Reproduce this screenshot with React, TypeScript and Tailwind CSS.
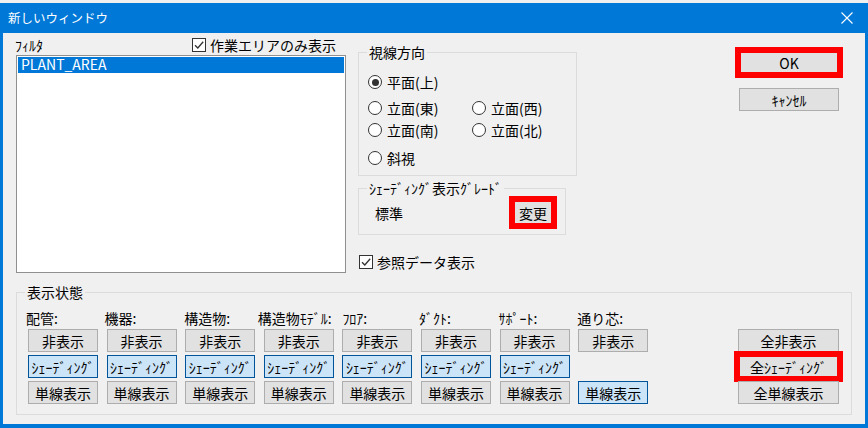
import React from "react";

const font = "font-['Noto_Sans_CJK_JP','Noto_Sans',sans-serif]";

type BtnProps = {
  children?: React.ReactNode;
  on?: boolean;
  mark?: boolean;
  className?: string;
};

function Btn({ children, on = false, mark = false, className = "" }: BtnProps) {
  const tone = on ? "border-[#005499] bg-[#cce4f7]" : "border-[#adadad] bg-[#e1e1e1]";
  const ring = mark ? "outline-solid outline-[6px] outline-offset-[-2px] outline-[#ff0000]" : "";
  return (
    <button
      className={`flex items-center justify-center whitespace-nowrap border text-[14px] leading-none text-black ${tone} ${ring} ${className}`}
    >
      {children}
    </button>
  );
}

function CheckBox() {
  return (
    <span className="flex h-[14px] w-[14px] shrink-0 items-center justify-center border border-[#333333] bg-white">
      <svg width="12" height="12" viewBox="0 0 12 12">
        <path d="M2 6.2 L4.8 9 L10.2 2.8" fill="none" stroke="#333333" strokeWidth="1.3" />
      </svg>
    </span>
  );
}

function Radio({ on = false }: { on?: boolean }) {
  return (
    <span className="flex h-[14px] w-[14px] shrink-0 items-center justify-center rounded-full border border-[#333333] bg-white">
      {on && <span className="h-[7px] w-[7px] rounded-full bg-[#333333]" />}
    </span>
  );
}

function RadioItem({ label, on = false }: { label: string; on?: boolean }) {
  return (
    <div className="flex w-[104px] items-center gap-[5px]">
      <Radio on={on} />
      <span>{label}</span>
    </div>
  );
}

const columns = [
  { label: "配管:", shift: "-ml-[2px]", line: false },
  { label: "機器:", shift: "-ml-[2px]", line: false },
  { label: "構造物:", shift: "-ml-[1px]", line: false },
  { label: "構造物ﾓﾃﾞﾙ:", shift: "-ml-[6px]", line: false },
  { label: "ﾌﾛｱ:", shift: "ml-0", line: false },
  { label: "ﾀﾞｸﾄ:", shift: "-ml-[2px]", line: false },
  { label: "ｻﾎﾟｰﾄ:", shift: "-ml-[1px]", line: false },
  { label: "通り芯:", shift: "-ml-[1px]", line: true },
];

export default function App() {
  return (
    <div className={`flex h-[428px] w-[868px] flex-col bg-[#0078d7] text-[14px] leading-[16px] text-black ${font}`}>
      {/* top edge */}
      <div className="h-[3px] bg-[#f0f0f0]" />

      {/* Title bar */}
      <div className="flex h-[30px] items-center justify-between pl-[8px] pr-[15px]">
        <span className="text-[12.5px] text-white">新しいウィンドウ</span>
        <svg width="12" height="12" viewBox="0 0 12 12">
          <path d="M0.5 0.5 L11.5 11.5 M11.5 0.5 L0.5 11.5" stroke="#ffffff" strokeWidth="1.1" />
        </svg>
      </div>

      {/* Client area */}
      <div className="mx-[3px] mb-[4px] flex flex-1 flex-col bg-[#f0f0f0]">
        <div className="flex h-[243px]">
          {/* Filter list */}
          <div className="ml-[13px] flex w-[330px] flex-col pt-[3px]">
            <div className="flex h-[17px] items-center">
              <span className="-ml-px">ﾌｨﾙﾀ</span>
              <label className="ml-auto mr-[10px] flex items-center gap-[4px]">
                <CheckBox />
                <span>作業エリアのみ表示</span>
              </label>
            </div>
            <div className="mt-[2px] h-[218px] border border-[#8f8f8f] bg-white p-px">
              <div className="h-[16px] bg-[#0078d7] pl-[3px] leading-[14px] text-white">PLANT_AREA</div>
            </div>
          </div>

          {/* View direction / shading */}
          <div className="ml-[12px] flex w-[208px] flex-col">
            <fieldset className="mt-[11px] h-[132px] border border-[#dcdcdc]">
              <legend className="ml-[8px] px-[2px] leading-[16px]">視線方向</legend>
              <div className="flex flex-col pl-[9px]">
                <div className="mt-[14px] flex h-[16px] items-center">
                  <RadioItem label="平面(上)" on />
                </div>
                <div className="mt-[10px] flex h-[16px] items-center">
                  <RadioItem label="立面(東)" />
                  <RadioItem label="立面(西)" />
                </div>
                <div className="mt-[6px] flex h-[16px] items-center">
                  <RadioItem label="立面(南)" />
                  <RadioItem label="立面(北)" />
                </div>
                <div className="mt-[12px] flex h-[16px] items-center">
                  <RadioItem label="斜視" />
                </div>
              </div>
            </fieldset>

            <fieldset className="mt-[4px] h-[55px] border border-[#dcdcdc]">
              <legend className="ml-[8px] px-[2px] leading-[16px]">ｼｪｰﾃﾞｨﾝｸﾞ表示ｸﾞﾚｰﾄﾞ</legend>
              <div className="mt-[4px] flex h-[25px] items-center pl-[16px] pr-[12px]">
                <span>標準</span>
                <Btn mark className="ml-auto h-[25px] w-[40px]">変更</Btn>
              </div>
            </fieldset>

            <label className="mt-[19px] flex h-[16px] items-center gap-[4px] pl-px">
              <CheckBox />
              <span>参照データ表示</span>
            </label>
          </div>

          {/* OK / Cancel */}
          <div className="ml-auto mr-[26px] flex flex-col pt-[18px]">
            <Btn mark className="h-[23px] w-[100px]">OK</Btn>
            <Btn className="mt-[14px] h-[23px] w-[100px]">ｷｬﾝｾﾙ</Btn>
          </div>
        </div>

        {/* Display state */}
        <fieldset className="mx-[13px] mt-[8px] h-[131px] border border-[#dcdcdc]">
          <legend className="ml-[8px] px-[2px] leading-[16px]">表示状態</legend>
          <div className="flex pl-[11px] pr-[12px] pt-[10px]">
            <div className="flex gap-[8.6px]">
              {columns.map((c) => (
                <div key={c.label} className="flex w-[70px] flex-col">
                  <span className={`h-[16px] whitespace-nowrap ${c.shift}`}>{c.label}</span>
                  <div className="mt-[3px] flex flex-col gap-[3px]">
                    <Btn className="h-[23px] w-[70px]">非表示</Btn>
                    {c.line ? (
                      <div className="h-[23px]" />
                    ) : (
                      <Btn on className="h-[23px] w-[70px]">ｼｪｰﾃﾞｨﾝｸﾞ</Btn>
                    )}
                    <Btn on={c.line} className="h-[23px] w-[70px]">単線表示</Btn>
                  </div>
                </div>
              ))}
            </div>
            <div className="ml-auto mt-[19px] flex flex-col gap-[3px]">
              <Btn className="h-[23px] w-[101px]">全非表示</Btn>
              <Btn mark className="h-[23px] w-[101px]">全ｼｪｰﾃﾞｨﾝｸﾞ</Btn>
              <Btn className="h-[23px] w-[101px]">全単線表示</Btn>
            </div>
          </div>
        </fieldset>
      </div>
    </div>
  );
}
